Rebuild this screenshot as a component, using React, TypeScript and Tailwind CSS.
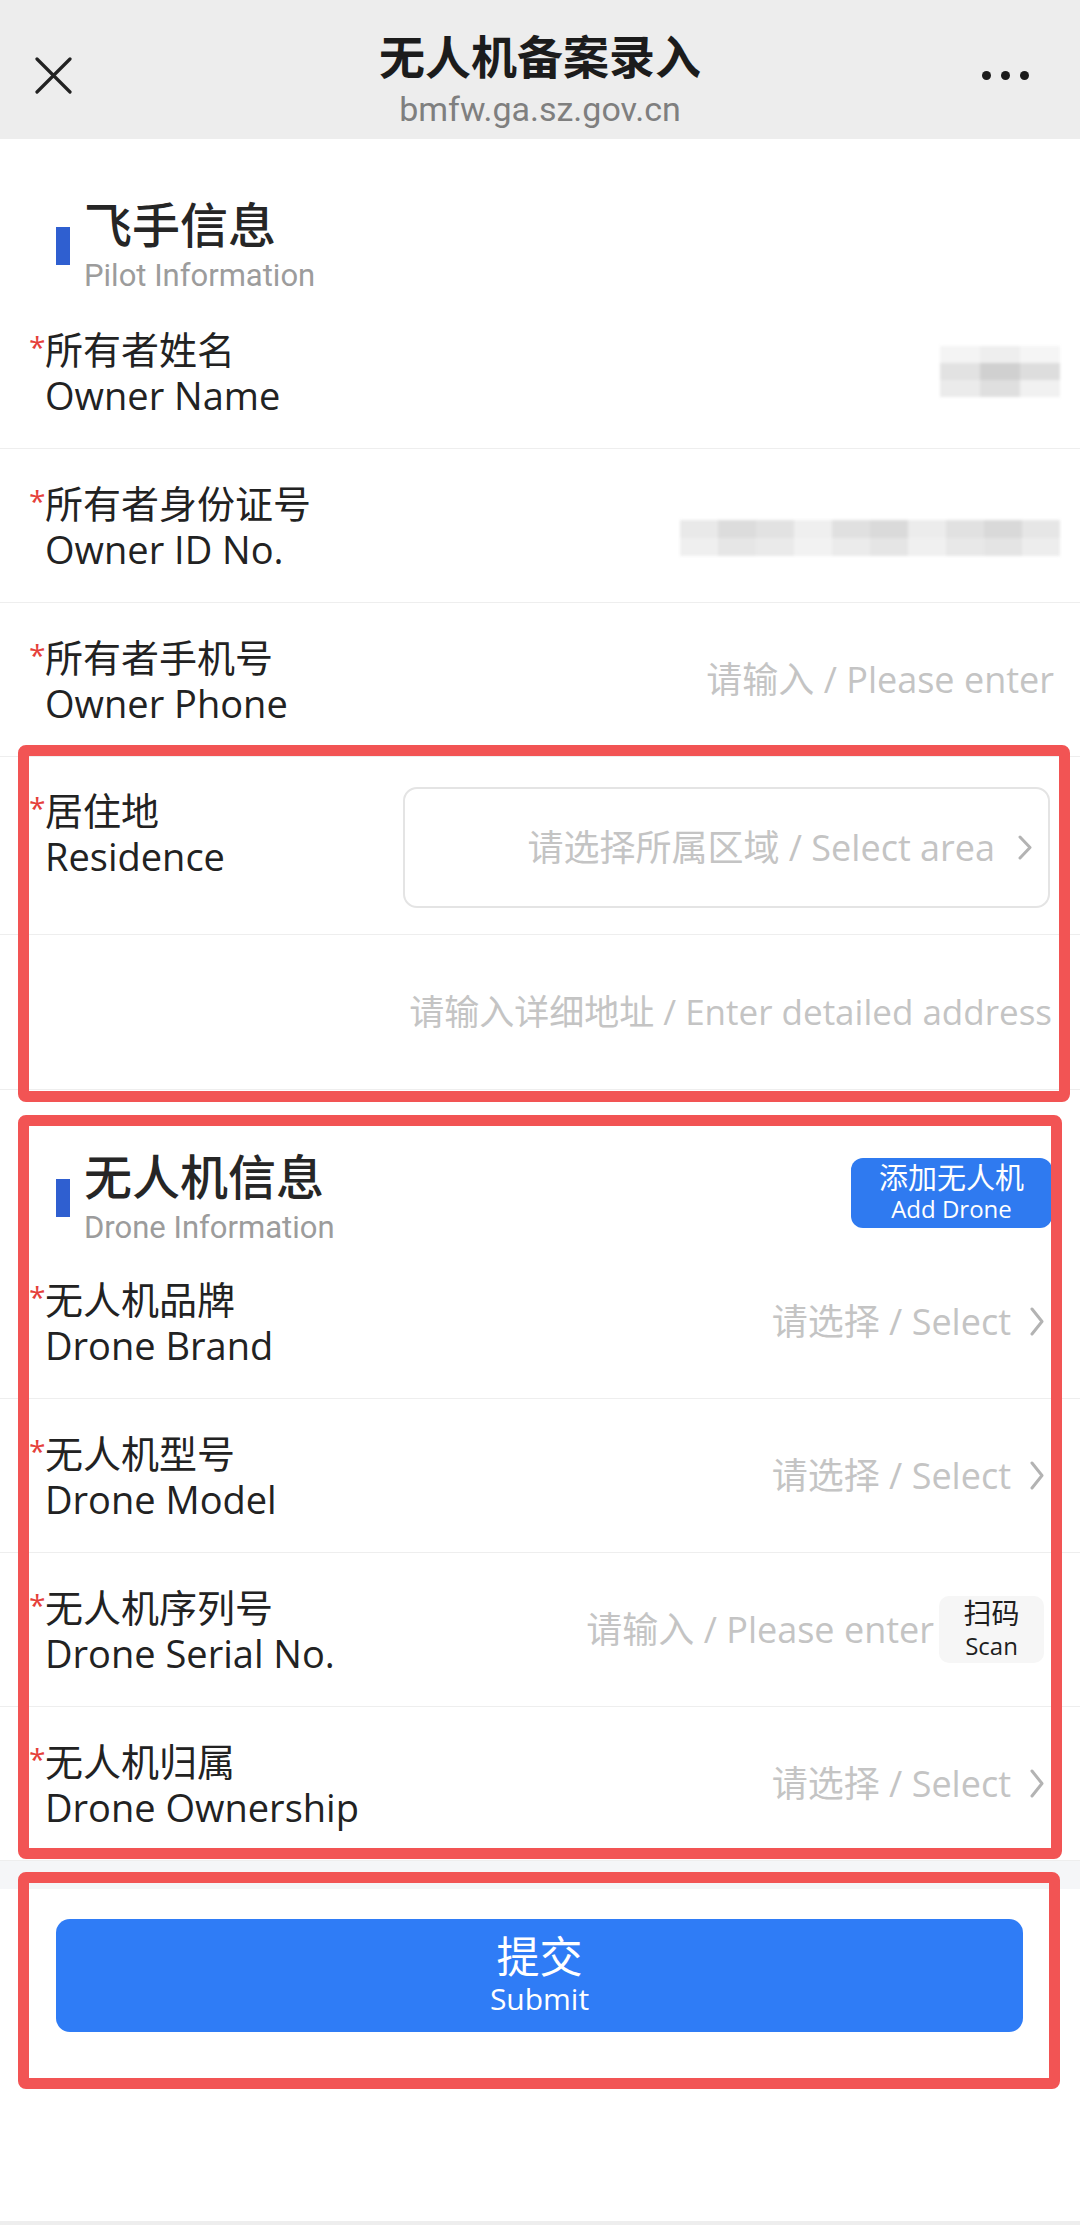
import React from 'react';

const nameBlur = [
  ['#f4f4f4', '#eeeeee', '#f5f5f5'],
  ['#e2e2e2', '#d0d0d0', '#dddddd'],
  ['#ebebeb', '#dfdfdf', '#f1f1f1'],
];

const idBlur = [
  ['#e9e9e9', '#dcdcdc', '#e2e2e2', '#efefef', '#e0e0e0', '#dadada', '#ececec', '#e1e1e1', '#d9d9d9', '#e6e6e6'],
  ['#efefef', '#e6e6e6', '#eaeaea', '#f2f2f2', '#ebebeb', '#e5e5e5', '#f0f0f0', '#e8e8e8', '#e4e4e4', '#ededed'],
];

function Mosaic({ rows, cell, cellH }: { rows: string[][]; cell: number; cellH: number }) {
  return (
    <div className="flex flex-col blur-[1.5px]">
      {rows.map((r, i) => (
        <div key={i} className="flex">
          {r.map((c, j) => (
            <div key={j} style={{ width: cell, height: cellH, backgroundColor: c }} />
          ))}
        </div>
      ))}
    </div>
  );
}

function Chevron({ h = 29 }: { h?: number }) {
  return (
    <svg width="16" height={h} viewBox={`0 0 16 ${h}`} fill="none">
      <polyline
        points={`3,2 13,${h / 2} 3,${h - 2}`}
        stroke="#b3b3b3"
        strokeWidth="3"
        strokeLinecap="round"
        strokeLinejoin="round"
      />
    </svg>
  );
}

function Label({ cn, en }: { cn: string; en: string }) {
  return (
    <div className="flex items-start">
      <span className="w-[16px] mt-[6px] text-[30px] leading-[30px] text-[#e5403a]">*</span>
      <div className="text-[38px] leading-[46px] text-[#222222]">
        <div>{cn}</div>
        <div>{en}</div>
      </div>
    </div>
  );
}

function Row({ cn, en, children }: { cn: string; en: string; children?: React.ReactNode }) {
  return (
    <div className="flex items-center justify-between h-[154px] border-b border-[#eeeeee] pl-[29px] pr-[26px]">
      <Label cn={cn} en={en} />
      <div className="flex items-center">{children}</div>
    </div>
  );
}

function Placeholder({ children }: { children: React.ReactNode }) {
  return <span className="text-[36px] leading-[46px] text-[#c4c4c4] whitespace-nowrap">{children}</span>;
}

function SelectValue() {
  return (
    <div className="flex items-center gap-[18px] mr-[9px]">
      <Placeholder>请选择 / Select</Placeholder>
      <Chevron />
    </div>
  );
}

function SectionTitle({ cn, en }: { cn: string; en: string }) {
  return (
    <div className="flex items-start pl-[56px]">
      <div className="w-[14px] h-[38px] mt-[30px] mr-[14px] bg-[#2f5fd0]" />
      <div>
        <div className="text-[48px] leading-[56px] font-medium text-[#262626]">{cn}</div>
        <div className="mt-[5px] text-[31px] leading-[36px] text-[#9c9c9c] font-['Roboto','Noto_Sans_CJK_SC',sans-serif]">
          {en}
        </div>
      </div>
    </div>
  );
}

function RedBox({ className }: { className: string }) {
  return (
    <div
      className={`absolute pointer-events-none border-[11px] border-[#f25454] rounded-[8px] ${className}`}
    />
  );
}

export default function App() {
  return (
    <div className="w-[1080px] min-h-[2226px] bg-white font-['Open_Sans','Noto_Sans_CJK_SC',sans-serif]">
      {/* top bar */}
      <div className="relative h-[139px] bg-[#ededed] flex flex-col items-center pt-[25px]">
        <svg className="absolute left-[35px] top-[57px]" width="37" height="37" viewBox="0 0 37 37">
          <path d="M2 2 L35 35 M35 2 L2 35" stroke="#222" strokeWidth="3.2" strokeLinecap="round" />
        </svg>
        <div className="text-[46px] leading-[58px] font-semibold text-[#1c1c1c] font-['Noto_Sans_CJK_SC',sans-serif]">
          无人机备案录入
        </div>
        <div className="mt-[6px] text-[34px] leading-[40px] text-[#7f7f7f] font-['Roboto',sans-serif]">
          bmfw.ga.sz.gov.cn
        </div>
        <div className="absolute left-[982px] top-[71px] flex gap-[10px]">
          <span className="w-[9px] h-[9px] rounded-full bg-[#1c1c1c]" />
          <span className="w-[9px] h-[9px] rounded-full bg-[#1c1c1c]" />
          <span className="w-[9px] h-[9px] rounded-full bg-[#1c1c1c]" />
        </div>
      </div>

      {/* pilot info */}
      <div className="pt-[58px] h-[156px]">
        <SectionTitle cn="飞手信息" en="Pilot Information" />
      </div>
      <Row cn="所有者姓名" en="Owner Name">
        <div className="mr-[-6px]">
          <Mosaic rows={nameBlur} cell={40} cellH={17} />
        </div>
      </Row>
      <Row cn="所有者身份证号" en="Owner ID No.">
        <div className="mr-[-6px] mt-[24px]">
          <Mosaic rows={idBlur} cell={38} cellH={18} />
        </div>
      </Row>
      <Row cn="所有者手机号" en="Owner Phone">
        <Placeholder>请输入 / Please enter</Placeholder>
      </Row>

      <div className="relative">
        <div className="flex items-start justify-between h-[178px] border-b border-[#eeeeee] pl-[29px] pr-[30px] pt-[30px]">
          <Label cn="居住地" en="Residence" />
          <div className="w-[647px] h-[121px] rounded-[14px] border-[2px] border-[#e4e4e4] flex items-center justify-end pr-[15px] gap-[22px]">
            <Placeholder>请选择所属区域 / Select area</Placeholder>
            <Chevron h={25} />
          </div>
        </div>
        <div className="flex items-center justify-end h-[155px] border-b border-[#eeeeee] pr-[28px]">
          <span className="text-[35px] leading-[46px] text-[#c4c4c4] whitespace-nowrap">
            请输入详细地址 / Enter detailed address
          </span>
        </div>
        <RedBox className="top-[-12px] bottom-[-12px] left-[18px] right-[10px]" />
      </div>

      {/* drone info */}
      <div className="relative">
        <div className="flex items-start justify-between h-[155px] pt-[59px] pr-[28px]">
          <SectionTitle cn="无人机信息" en="Drone Information" />
          <div className="mt-[9px] w-[201px] h-[70px] rounded-[12px] bg-[#2f7af0] flex flex-col items-center justify-center text-white">
            <div className="text-[29px] leading-[32px]">添加无人机</div>
            <div className="text-[24px] leading-[33px] mt-[-2px]">Add Drone</div>
          </div>
        </div>
        <Row cn="无人机品牌" en="Drone Brand">
          <SelectValue />
        </Row>
        <Row cn="无人机型号" en="Drone Model">
          <SelectValue />
        </Row>
        <Row cn="无人机序列号" en="Drone Serial No.">
          <Placeholder>请输入 / Please enter</Placeholder>
          <div className="ml-[5px] mr-[10px] w-[105px] h-[67px] rounded-[10px] bg-[#f6f6f6] flex flex-col items-center justify-center text-[#1e1e1e]">
            <div className="text-[28px] leading-[31px]">扫码</div>
            <div className="text-[24px] leading-[33px]">Scan</div>
          </div>
        </Row>
        <Row cn="无人机归属" en="Drone Ownership">
          <SelectValue />
        </Row>
        <RedBox className="top-[25px] bottom-[2px] left-[18px] right-[18px]" />
      </div>

      <div className="h-[28px] bg-[#f5f6f8]" />

      {/* submit */}
      <div className="relative h-[332px] pt-[30px] px-[56px]">
        <div className="w-[967px] h-[113px] rounded-[14px] bg-[#2f7cf6] flex flex-col items-center justify-center text-white">
          <div className="text-[43px] leading-[50px]">提交</div>
          <div className="text-[30px] leading-[41px] mt-[-4px]">Submit</div>
        </div>
        <RedBox className="top-[-17px] h-[217px] left-[18px] right-[20px]" />
      </div>
      <div className="h-[4px] bg-[#eeeeee]" />
    </div>
  );
}
